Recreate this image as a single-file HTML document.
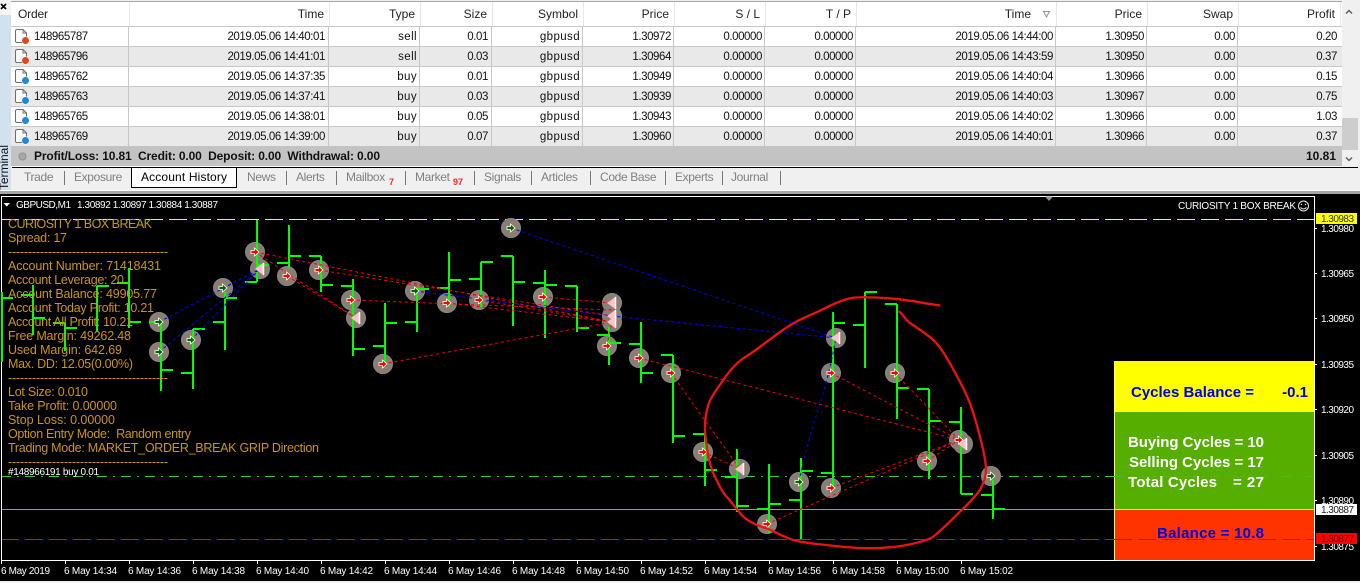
<!DOCTYPE html>
<html><head><meta charset="utf-8"><style>
html,body{margin:0;padding:0;background:#f0f0f0;width:1360px;height:583px;overflow:hidden}
svg{display:block}
text{font-family:"Liberation Sans",Arial,sans-serif;white-space:pre}
.t text{font-size:11.5px;letter-spacing:-.42px;fill:#111;text-anchor:end}
.t text.w{letter-spacing:.4px}
.h text{font-size:12px;fill:#222;text-anchor:end}
.tab text{font-size:12px;fill:#808080;letter-spacing:-.35px}
.g text{font-size:12.5px;fill:#cc9512}
.ax text{font-size:10px;fill:#fff}
.p text{font-size:15px;font-weight:bold}
</style></head><body>
<svg xmlns="http://www.w3.org/2000/svg" width="1360" height="583" viewBox="0 0 1360 583">
<defs>
<g id="doc"><path d="M3.500.5H9L12.500 4V12Q12.500 13.500 11 13.500H3Q1.500 13.500 1.500 12V2Q1.500.5 3.500.5Z" fill="#fff" stroke="#6d6d6d"/><path d="M9 .5V4H12.500" fill="none" stroke="#6d6d6d"/></g>
<circle id="c" r="9.500" fill="#8b7d70" stroke="#7e8b98"/>
<path id="ar" d="M-4-1.500H-.5V-4L4 0-.5 4V1.500H-4Z" fill="#f00" stroke="#fff" stroke-width=".8"/>
<path id="ag" d="M-4-1.500H-.5V-4L4 0-.5 4V1.500H-4Z" fill="#006400" stroke="#fff" stroke-width=".8"/>
<g id="ap"><path d="M4-6.500-5 0 4 6.500Z" fill="#ffc0cb"/><path d="M3.500-6V6" stroke="#fff" stroke-width="1.500"/></g>
</defs>

<rect width="1360" height="583" fill="#f0f0f0"/>
<!-- left rail -->
<rect x="0" y="15" width="11" height="175" fill="#d3e1ee"/>
<rect x="0" y="0" width="11" height="15" fill="#f4f4f4"/>
<path d="M1 4l5 5M6 4l-5 5" stroke="#000" stroke-width="1.600"/>
<text transform="translate(8,190) rotate(-90)" font-size="12" fill="#111" textLength="45">Terminal</text>

<!-- table -->
<rect x="11" y="1" width="1331" height="166" fill="#fff"/>
<rect x="11" y="1" width="1331" height="1" fill="#a8a8a8"/>
<rect x="11" y="26" width="1331" height="1" fill="#c8c8c8"/>
<g fill="#e9e9e9"><rect x="11" y="47" width="1331" height="19"/><rect x="11" y="87" width="1331" height="19"/><rect x="11" y="127" width="1331" height="19"/></g>
<g fill="#c8c8c8"><rect x="11" y="46" width="1331" height="1"/><rect x="11" y="66" width="1331" height="1"/><rect x="11" y="86" width="1331" height="1"/><rect x="11" y="106" width="1331" height="1"/><rect x="11" y="126" width="1331" height="1"/>
<rect x="128" y="27" width="1" height="119"/><rect x="328" y="27" width="1" height="119"/><rect x="419" y="27" width="1" height="119"/><rect x="491" y="27" width="1" height="119"/><rect x="582" y="27" width="1" height="119"/><rect x="673" y="27" width="1" height="119"/><rect x="764" y="27" width="1" height="119"/><rect x="855" y="27" width="1" height="119"/><rect x="1055" y="27" width="1" height="119"/><rect x="1146" y="27" width="1" height="119"/><rect x="1237" y="27" width="1" height="119"/></g>
<g fill="#e8e8e8"><rect x="129" y="2" width="1" height="24"/><rect x="329" y="2" width="1" height="24"/><rect x="420" y="2" width="1" height="24"/><rect x="492" y="2" width="1" height="24"/><rect x="583" y="2" width="1" height="24"/><rect x="674" y="2" width="1" height="24"/><rect x="765" y="2" width="1" height="24"/><rect x="856" y="2" width="1" height="24"/><rect x="1056" y="2" width="1" height="24"/><rect x="1147" y="2" width="1" height="24"/><rect x="1238" y="2" width="1" height="24"/><rect x="1340" y="2" width="1" height="24"/></g>

<g class="h">
<text x="18" y="18" style="text-anchor:start" textLength="30">Order</text><text x="324" y="18">Time</text><text x="415" y="18">Type</text><text x="487" y="18">Size</text><text x="578" y="18">Symbol</text><text x="669" y="18">Price</text><text x="760" y="18">S / L</text><text x="851" y="18">T / P</text><text x="1031" y="18">Time</text><text x="1142" y="18">Price</text><text x="1233" y="18">Swap</text><text x="1335" y="18">Profit</text>
</g>
<path d="M1043.500 11.500H1049.500L1046.500 17Z" fill="none" stroke="#909090"/>

<g class="t">
<text x="34" y="40" style="text-anchor:start">148965787</text><text x="34" y="60" style="text-anchor:start">148965796</text><text x="34" y="80" style="text-anchor:start">148965762</text><text x="34" y="100" style="text-anchor:start">148965763</text><text x="34" y="120" style="text-anchor:start">148965765</text><text x="34" y="140" style="text-anchor:start">148965769</text>
<text x="325" y="40">2019.05.06 14:40:01</text><text class="w" x="417" y="40">sell</text><text x="488" y="40">0.01</text><text class="w" x="580" y="40">gbpusd</text><text x="671" y="40">1.30972</text><text x="762" y="40">0.00000</text><text x="853" y="40">0.00000</text><text x="1053" y="40">2019.05.06 14:44:00</text><text x="1144" y="40">1.30950</text><text x="1235" y="40">0.00</text><text x="1337" y="40">0.20</text>
<text x="325" y="60">2019.05.06 14:41:01</text><text class="w" x="417" y="60">sell</text><text x="488" y="60">0.03</text><text class="w" x="580" y="60">gbpusd</text><text x="671" y="60">1.30964</text><text x="762" y="60">0.00000</text><text x="853" y="60">0.00000</text><text x="1053" y="60">2019.05.06 14:43:59</text><text x="1144" y="60">1.30950</text><text x="1235" y="60">0.00</text><text x="1337" y="60">0.37</text>
<text x="325" y="80">2019.05.06 14:37:35</text><text class="w" x="417" y="80">buy</text><text x="488" y="80">0.01</text><text class="w" x="580" y="80">gbpusd</text><text x="671" y="80">1.30949</text><text x="762" y="80">0.00000</text><text x="853" y="80">0.00000</text><text x="1053" y="80">2019.05.06 14:40:04</text><text x="1144" y="80">1.30966</text><text x="1235" y="80">0.00</text><text x="1337" y="80">0.15</text>
<text x="325" y="100">2019.05.06 14:37:41</text><text class="w" x="417" y="100">buy</text><text x="488" y="100">0.03</text><text class="w" x="580" y="100">gbpusd</text><text x="671" y="100">1.30939</text><text x="762" y="100">0.00000</text><text x="853" y="100">0.00000</text><text x="1053" y="100">2019.05.06 14:40:03</text><text x="1144" y="100">1.30967</text><text x="1235" y="100">0.00</text><text x="1337" y="100">0.75</text>
<text x="325" y="120">2019.05.06 14:38:01</text><text class="w" x="417" y="120">buy</text><text x="488" y="120">0.05</text><text class="w" x="580" y="120">gbpusd</text><text x="671" y="120">1.30943</text><text x="762" y="120">0.00000</text><text x="853" y="120">0.00000</text><text x="1053" y="120">2019.05.06 14:40:02</text><text x="1144" y="120">1.30966</text><text x="1235" y="120">0.00</text><text x="1337" y="120">1.03</text>
<text x="325" y="140">2019.05.06 14:39:00</text><text class="w" x="417" y="140">buy</text><text x="488" y="140">0.07</text><text class="w" x="580" y="140">gbpusd</text><text x="671" y="140">1.30960</text><text x="762" y="140">0.00000</text><text x="853" y="140">0.00000</text><text x="1053" y="140">2019.05.06 14:40:01</text><text x="1144" y="140">1.30966</text><text x="1235" y="140">0.00</text><text x="1337" y="140">0.37</text>
</g>
<use href="#doc" x="14" y="29"/><use href="#doc" x="14" y="49"/><use href="#doc" x="14" y="69"/><use href="#doc" x="14" y="89"/><use href="#doc" x="14" y="109"/><use href="#doc" x="14" y="129"/>
<g stroke="#fff" stroke-width=".6"><circle cx="25.500" cy="40.500" r="3.800" fill="#e2471a"/><circle cx="25.500" cy="60.500" r="3.800" fill="#e2471a"/><circle cx="25.500" cy="80.500" r="3.800" fill="#1c88d8"/><circle cx="25.500" cy="100.500" r="3.800" fill="#1c88d8"/><circle cx="25.500" cy="120.500" r="3.800" fill="#1c88d8"/><circle cx="25.500" cy="140.500" r="3.800" fill="#1c88d8"/></g>

<!-- status row -->
<rect x="11" y="146" width="1331" height="20" fill="#c3c3c3"/>
<circle cx="22.500" cy="156.500" r="3.500" fill="#a8a8a8" stroke="#8e8e8e"/>
<text x="34" y="160" font-size="12" font-weight="bold" fill="#111" textLength="346">Profit/Loss: 10.81  Credit: 0.00  Deposit: 0.00  Withdrawal: 0.00</text>
<text x="1336" y="160" font-size="12" font-weight="bold" fill="#111" text-anchor="end">10.81</text>

<!-- scrollbar -->
<rect x="1342" y="1" width="16" height="165" fill="#f0f0f0"/>
<rect x="1342" y="118" width="16" height="32" fill="#cdcdcd"/>
<path d="M1346 13.500l3-3 3 3M1346 157.500l3 3 3-3" fill="none" stroke="#606060" stroke-width="1.500"/>

<!-- tabs -->
<rect x="12" y="167" width="1346" height="1" fill="#000"/>
<rect x="131" y="167" width="106" height="21" fill="#000"/>
<rect x="132" y="168" width="104" height="19" fill="#fff"/>
<g class="tab">
<text x="24" y="181">Trade</text><text x="74" y="181">Exposure</text><text x="141" y="181" style="fill:#000;letter-spacing:0" textLength="86">Account History</text><text x="247" y="181">News</text><text x="296" y="181">Alerts</text><text x="346" y="181">Mailbox</text><text x="415" y="181">Market</text><text x="484" y="181">Signals</text><text x="541" y="181">Articles</text><text x="600" y="181">Code Base</text><text x="675" y="181">Experts</text><text x="731" y="181">Journal</text>
</g>
<text x="389" y="185" font-size="9" font-weight="bold" fill="#f22">7</text>
<text x="453" y="185" font-size="9" font-weight="bold" fill="#f22">97</text>
<g fill="#777"><rect x="64" y="171" width="1" height="14"/><rect x="286" y="171" width="1" height="14"/><rect x="336" y="171" width="1" height="14"/><rect x="405" y="171" width="1" height="14"/><rect x="474" y="171" width="1" height="14"/><rect x="531" y="171" width="1" height="14"/><rect x="590" y="171" width="1" height="14"/><rect x="665" y="171" width="1" height="14"/><rect x="722" y="171" width="1" height="14"/><rect x="780" y="171" width="1" height="14"/></g>
<rect x="0" y="190" width="1360" height="1" fill="#fcfcfc"/>
<rect x="0" y="191" width="1360" height="3" fill="#a6a6a6"/>

<!-- chart -->
<rect x="0" y="194" width="1360" height="387" fill="#000"/>
<g fill="none">
<path d="M1 219.500H1314" stroke="#ff0" stroke-dasharray="18 6"/>
<path d="M1 476.500H1314" stroke="#32cd32" stroke-dasharray="10 6 2 6"/>
<path d="M1 509.500H1314" stroke="#8c96a8"/>
<path d="M1 539.500H1314" stroke="#f00" stroke-dasharray="18 6"/>
</g>

<!-- panels -->
<rect x="1114" y="361" width="200" height="51" fill="#ff0"/>
<rect x="1114" y="412" width="200" height="97" fill="#55ae00"/>
<rect x="1114" y="509" width="200" height="1" fill="#e8e840"/>
<rect x="1114" y="510" width="200" height="51" fill="#f30"/>
<rect x="1114" y="361" width="1" height="200" fill="#ffff66"/>
<path d="M1114 476.500H1314" stroke="#4fb81e" stroke-dasharray="10 6 2 6"/>
<path d="M1114 539.500H1314" stroke="#d81010" stroke-dasharray="18 6"/>
<g class="p">
<text x="1131" y="397" fill="#0000e0" textLength="123">Cycles Balance =</text><text x="1308" y="397" fill="#0000e0" text-anchor="end">-0.1</text>
<text x="1128" y="447" fill="#fff" textLength="136">Buying Cycles = 10</text>
<text x="1129" y="467" fill="#fff" textLength="135">Selling Cycles = 17</text>
<text x="1128" y="487" fill="#fff" textLength="89">Total Cycles</text><text x="1233" y="487" fill="#fff" textLength="31">= 27</text>
<text x="1157" y="538" fill="#0000e0" textLength="107">Balance = 10.8</text>
</g>

<!-- chart frame -->
<g fill="#fff" shape-rendering="crispEdges">
<rect x="1" y="196" width="1314" height="1"/><rect x="1" y="196" width="1" height="365"/><rect x="1314" y="196" width="1" height="365"/><rect x="1" y="560" width="1314" height="1"/>
<path d="M1 561h1v3H1zM65 561h1v3h-1zM129 561h1v3h-1zM193 561h1v3h-1zM257 561h1v3h-1zM321 561h1v3h-1zM385 561h1v3h-1zM449 561h1v3h-1zM513 561h1v3h-1zM577 561h1v3h-1zM641 561h1v3h-1zM705 561h1v3h-1zM769 561h1v3h-1zM833 561h1v3h-1zM897 561h1v3h-1zM961 561h1v3h-1z"/>
<path d="M1315 228h2v1h-2zM1315 273h2v1h-2zM1315 318h2v1h-2zM1315 364h2v1h-2zM1315 409h2v1h-2zM1315 455h2v1h-2zM1315 500h2v1h-2zM1315 546h2v1h-2z"/>
</g>
<path d="M1045 196.500H1053L1049 201Z" fill="#8696a8"/>

<!-- marker discs -->
<g>
<use href="#c" x="159" y="322"/><use href="#c" x="159" y="352"/><use href="#c" x="191" y="340"/><use href="#c" x="223" y="288"/><use href="#c" x="255" y="252"/><use href="#c" x="260" y="269"/><use href="#c" x="287" y="276"/><use href="#c" x="319" y="270"/><use href="#c" x="351" y="300"/><use href="#c" x="356" y="318"/><use href="#c" x="383" y="364"/><use href="#c" x="415" y="291"/><use href="#c" x="447" y="303"/><use href="#c" x="479" y="300"/><use href="#c" x="511" y="228"/><use href="#c" x="543" y="297"/><use href="#c" x="612" y="303"/><use href="#c" x="612" y="316"/><use href="#c" x="612" y="322"/><use href="#c" x="607" y="346"/><use href="#c" x="639" y="358"/><use href="#c" x="671" y="373"/><use href="#c" x="703" y="452"/><use href="#c" x="739" y="469"/><use href="#c" x="740" y="469"/><use href="#c" x="767" y="524"/><use href="#c" x="799" y="482"/><use href="#c" x="831" y="488"/><use href="#c" x="831" y="373"/><use href="#c" x="836" y="338"/><use href="#c" x="895" y="373"/><use href="#c" x="927" y="461"/><use href="#c" x="959" y="440"/><use href="#c" x="963" y="444"/><use href="#c" x="991" y="476"/>
</g>

<!-- OHLC bars -->
<path fill="none" stroke="#0f0" stroke-width="2" shape-rendering="crispEdges" d="M2 292V362M2 298H13
M33 285V335M21 295H33M33 318H45
M65 323V351M53 323H65M65 328H77
M97 286V331M97 286H109
M129 268V328M117 283H129M129 322H141
M161 322V391M149 322H161M161 370H173
M193 329V389M181 373H193M193 329H205
M225 292V350M213 322H225M225 298H237
M257 220V282M245 282H257M257 265H269
M289 225V268M277 263H289M289 256H301
M321 256V292M309 256H321M321 285H333
M353 279V356M341 286H353M353 349H365
M385 303V364M373 346H385M385 323H397
M417 289V332M405 322H417M417 289H429
M449 252V307M437 288H449M449 280H461
M481 262V307M469 279H481M481 262H493
M513 256V326M501 256H513M513 282H525
M545 270V338M533 283H545M545 285H557
M577 286V332M565 286H577M577 328H589
M609 327V365M597 335H609M609 343H621
M641 322V383M629 344H641M641 373H653
M673 355V443M661 355H673M673 436H685
M705 424V486M693 434H705M705 470H717
M737 449V512M725 477H737M737 506H749
M769 464V533M757 509H769M769 504H781
M801 458V539M789 500H801M801 471H813
M833 312V488M821 473H833M833 323H845
M865 292V368M853 325H865M865 292H877
M897 304V419M885 304H897M897 388H909
M929 389V479M917 389H929M929 421H941
M961 407V494M949 422H961M961 494H973
M993 480V519M981 495H993M993 509H1005"/>

<!-- trade lines -->
<g fill="none" stroke="#00f" stroke-width="1" stroke-dasharray="3 3">
<path d="M159 322L260 269M159 352L260 269M191 340L260 269M223 288L260 269M415 291L612 316L836 338M511 228L836 338M799 482Q808 440 818 410T836 338"/>
</g>
<g fill="none" stroke="#f00" stroke-width="1" stroke-dasharray="3 3">
<path d="M255 252L612 322M287 276L356 318M255 252L356 318M319 270L612 316M351 300L612 310M447 303L612 322M479 300L612 322M543 297L612 303M383 364L612 322M607 346L612 322M639 358L959 440M671 373L740 469M703 452L740 469M831 373L959 440M895 373L959 440M767 524L959 440M831 488L959 440M927 461L959 440"/>
</g>

<!-- marker glyphs -->
<g>
<use href="#ag" x="159" y="322"/><use href="#ag" x="159" y="352"/><use href="#ag" x="191" y="340"/><use href="#ag" x="223" y="288"/><use href="#ar" x="255" y="252"/><use href="#ap" x="260" y="269"/><use href="#ar" x="287" y="276"/><use href="#ar" x="319" y="270"/><use href="#ar" x="351" y="300"/><use href="#ap" x="356" y="318"/><use href="#ar" x="383" y="364"/><use href="#ag" x="415" y="291"/><use href="#ar" x="447" y="303"/><use href="#ar" x="479" y="300"/><use href="#ag" x="511" y="228"/><use href="#ar" x="543" y="297"/><use href="#ap" x="612" y="303"/><use href="#ap" x="612" y="316"/><use href="#ap" x="612" y="322"/><use href="#ar" x="607" y="346"/><use href="#ar" x="639" y="358"/><use href="#ar" x="671" y="373"/><use href="#ar" x="703" y="452"/><use href="#ap" x="740" y="469"/><use href="#ar" x="767" y="524"/><use href="#ag" x="799" y="482"/><use href="#ar" x="831" y="488"/><use href="#ar" x="831" y="373"/><use href="#ap" x="836" y="338"/><use href="#ar" x="895" y="373"/><use href="#ar" x="927" y="461"/><use href="#ap" x="963" y="444"/><use href="#ar" x="959" y="440"/><use href="#ag" x="991" y="476"/>
</g>

<!-- hand-drawn circle -->
<path transform="translate(660,280) scale(.33333)" fill="none" stroke="#ee1111" stroke-width="7" stroke-linecap="round" stroke-linejoin="round" d="M838 76C790 70 750 60 700 56C650 52 600 50 575 54C550 58 520 72 480 92C450 106 420 118 400 130C350 158 300 205 250 235C225 252 205 278 190 300C170 328 152 352 145 375C138 398 135 415 135 440C135 470 140 500 145 530C152 560 160 585 170 600C180 622 190 640 200 650C220 672 235 695 250 710C275 730 295 738 320 745C350 758 375 772 400 780C430 788 465 792 500 795C540 800 580 804 620 805C665 805 705 802 740 795C775 788 805 780 820 770C850 745 875 720 900 695C925 672 945 650 960 630C972 608 978 590 978 570C978 540 970 515 965 490C955 450 945 410 930 370C915 330 892 290 870 250C855 225 840 198 820 180C795 158 765 140 745 125C730 112 735 108 718 95"/>

<!-- chart header -->
<path d="M3.500 203H10L6.750 206.500Z" fill="#fff"/>
<g class="ax">
<text x="16" y="208" textLength="55">GBPUSD,M1</text>
<text x="77" y="208" textLength="141">1.30892 1.30897 1.30884 1.30887</text>
<text x="1178" y="209" textLength="118">CURIOSITY 1 BOX BREAK</text>
</g>
<circle cx="1303.500" cy="206" r="5" fill="none" stroke="#e8e8e8"/>
<path d="M1300.500 207.500Q1303.500 210.500 1306.500 207.500" fill="none" stroke="#e8e8e8"/>
<circle cx="1301.500" cy="204.500" r=".7" fill="#e8e8e8"/><circle cx="1305.500" cy="204.500" r=".7" fill="#e8e8e8"/>

<!-- info text -->
<g class="g">
<text x="8" y="228" textLength="144">CURIOSITY 1 BOX BREAK</text>
<text x="8" y="242" textLength="59">Spread: 17</text>
<text x="8" y="256" textLength="160">----------------------------------------</text>
<text x="8" y="270" textLength="153">Account Number: 71418431</text>
<text x="8" y="284" textLength="116">Account Leverage: 20</text>
<text x="8" y="298" textLength="149">Account Balance: 49905.77</text>
<text x="8" y="312" textLength="146">Account Today Profit: 10.21</text>
<text x="8" y="326" textLength="125">Account All Profit: 10.21</text>
<text x="8" y="340" textLength="123">Free Margin: 49262.48</text>
<text x="8" y="354" textLength="114">Used Margin: 642.69</text>
<text x="8" y="368" textLength="125">Max. DD: 12.05(0.00%)</text>
<text x="8" y="382" textLength="160">----------------------------------------</text>
<text x="8" y="396" textLength="80">Lot Size: 0.010</text>
<text x="8" y="410" textLength="109">Take Profit: 0.00000</text>
<text x="8" y="424" textLength="107">Stop Loss: 0.00000</text>
<text x="8" y="438" textLength="183">Option Entry Mode:  Random entry</text>
<text x="8" y="452" textLength="311">Trading Mode: MARKET_ORDER_BREAK GRIP Direction</text>
<text x="8" y="466" textLength="160">----------------------------------------</text>
</g>
<text x="8" y="475" font-size="10" fill="#fff" textLength="91">#148966191 buy 0.01</text>

<!-- axes -->
<g class="ax">
<text x="1" y="574" textLength="49">6 May 2019</text><text x="64" y="574" textLength="53">6 May 14:34</text><text x="128" y="574" textLength="53">6 May 14:36</text><text x="192" y="574" textLength="53">6 May 14:38</text><text x="256" y="574" textLength="53">6 May 14:40</text><text x="320" y="574" textLength="53">6 May 14:42</text><text x="384" y="574" textLength="53">6 May 14:44</text><text x="448" y="574" textLength="53">6 May 14:46</text><text x="512" y="574" textLength="53">6 May 14:48</text><text x="576" y="574" textLength="53">6 May 14:50</text><text x="640" y="574" textLength="53">6 May 14:52</text><text x="704" y="574" textLength="53">6 May 14:54</text><text x="768" y="574" textLength="53">6 May 14:56</text><text x="832" y="574" textLength="53">6 May 14:58</text><text x="896" y="574" textLength="53">6 May 15:00</text><text x="960" y="574" textLength="53">6 May 15:02</text>
<text x="1321" y="232" textLength="33">1.30980</text><text x="1321" y="277" textLength="33">1.30965</text><text x="1321" y="322" textLength="33">1.30950</text><text x="1321" y="368" textLength="33">1.30935</text><text x="1321" y="413" textLength="33">1.30920</text><text x="1321" y="459" textLength="33">1.30905</text><text x="1321" y="504" textLength="33">1.30890</text><text x="1321" y="550" textLength="33">1.30875</text>
<rect x="1316" y="213" width="41" height="11" fill="#ff0"/><text x="1321" y="222" style="fill:#333" textLength="33">1.30983</text>
<rect x="1316" y="504" width="41" height="11" fill="#fff"/><text x="1321" y="513" style="fill:#222" textLength="33">1.30887</text>
<rect x="1316" y="533" width="41" height="11" fill="#f00"/><text x="1321" y="542" style="fill:#600" textLength="33">1.30877</text>
</g>
</svg>
</body></html>
